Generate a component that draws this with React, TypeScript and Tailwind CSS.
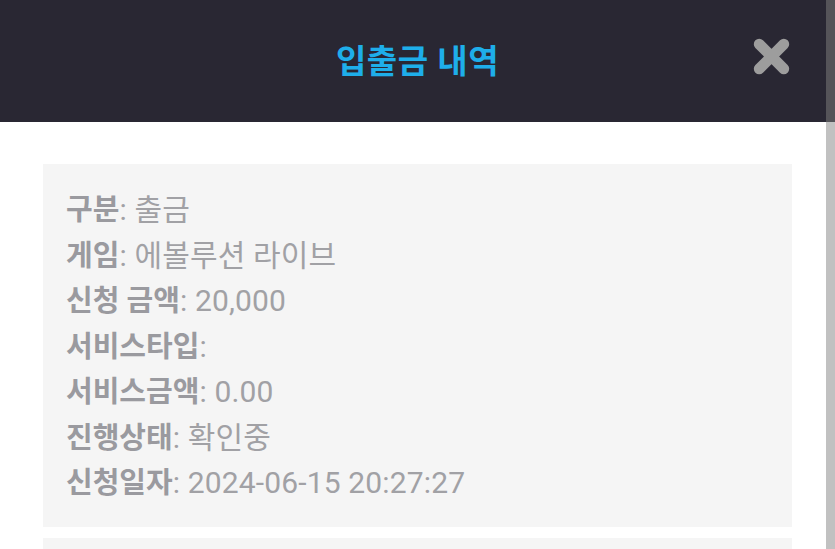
const rows: [string, string][] = [
  ["구분", " 출금"],
  ["게임", " 에볼루션 라이브"],
  ["신청 금액", " 20,000"],
  ["서비스타입", ""],
  ["서비스금액", " 0.00"],
  ["진행상태", " 확인중"],
  ["신청일자", " 2024-06-15 20:27:27"],
];

const font = { fontFamily: '"Roboto", "Noto Sans CJK KR", sans-serif' };

export default function App() {
  return (
    <div className="relative h-[549px] w-[835px] overflow-hidden bg-white" style={font}>
      <header className="relative flex h-[122px] items-center justify-center bg-[#292733]">
        <h1 className="text-[33px] font-bold leading-none tracking-[0.5px] text-[#1eaeea]">
          입출금 내역
        </h1>
        <button className="absolute right-[44px] top-[37px] h-[39px] w-[39px]">
          <svg viewBox="0 0 38 38" className="h-full w-full">
            <path
              d="M7 7 L31 31 M31 7 L7 31"
              stroke="#9d9d9d"
              strokeWidth="10.5"
              strokeLinecap="round"
              fill="none"
            />
          </svg>
        </button>
      </header>

      <div className="flex flex-col gap-[11px] px-[43px] pt-[42px]">
        <div className="bg-[#f5f5f5] pb-[21px] pl-[23px] pt-[23px]">
          {rows.map(([label, value]) => (
            <p key={label} className="text-[30px] leading-[45.5px] tracking-[0.15px] text-[#a1a1a5]">
              <span className="text-[29px] font-bold leading-none tracking-normal text-[#9a9a9f]">
                {label}
              </span>
              :{value}
            </p>
          ))}
        </div>
        <div className="h-[120px] bg-[#f5f5f5]" />
      </div>

      <div className="absolute right-0 top-0 flex h-full w-[9px] flex-col">
        <div className="h-[122px] bg-[#555459]" />
        <div className="flex-1 bg-[#c1c1c1]" />
      </div>
    </div>
  );
}
